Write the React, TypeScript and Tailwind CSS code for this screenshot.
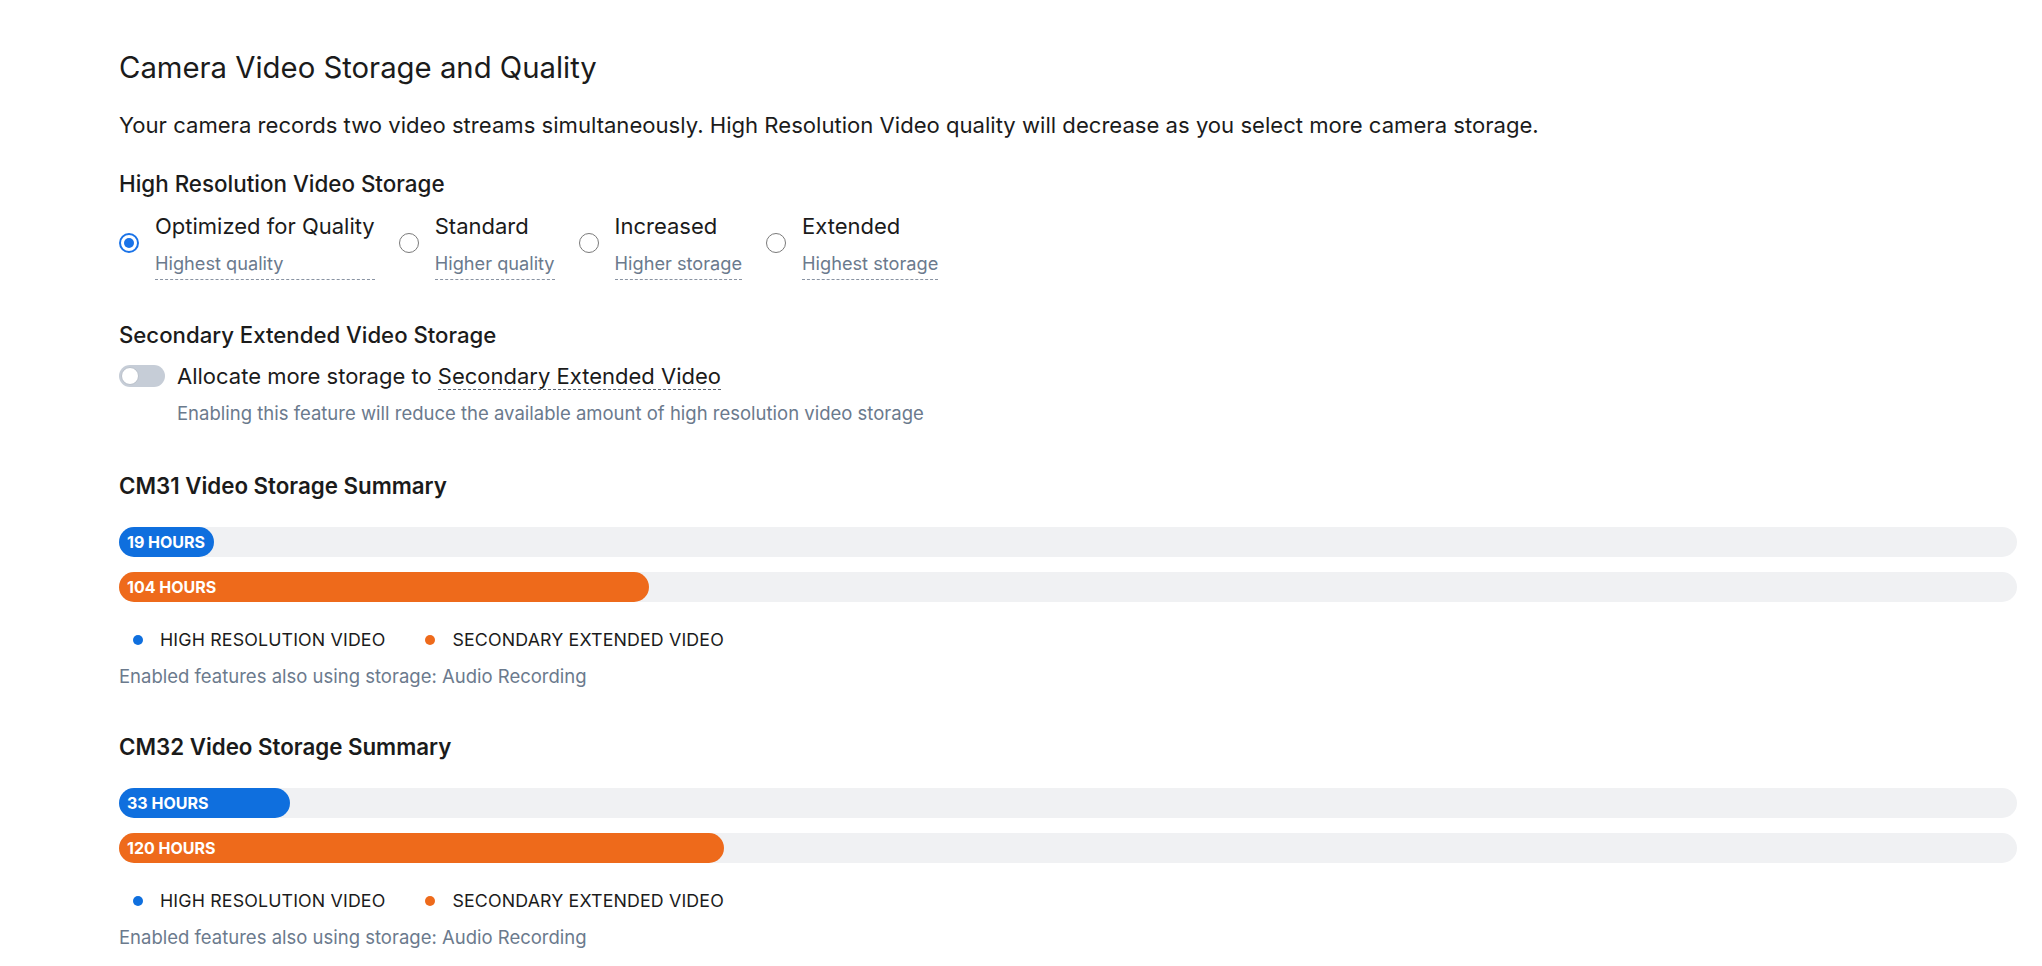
import React from "react";

const font = { fontFamily: "Inter, 'Noto Sans', sans-serif" };

function Radio({ checked }: { checked?: boolean }) {
  return checked ? (
    <span className="mt-[21px] flex h-[20px] w-[20px] shrink-0 items-center justify-center rounded-full border-2 border-[#1a73e8] bg-white">
      <span className="h-[10px] w-[10px] rounded-full bg-[#1a73e8]" />
    </span>
  ) : (
    <span className="mt-[21px] h-[20px] w-[20px] shrink-0 rounded-full border-[1.5px] border-[#7a7a7a] bg-white" />
  );
}

function Option({ label, sub, checked }: { label: string; sub: string; checked?: boolean }) {
  return (
    <div className="flex items-start gap-[16px]">
      <Radio checked={checked} />
      <div className="flex flex-col border-b border-dashed border-[#8a94a3] pb-[4px]">
        <span className="text-[22px] leading-[28px] text-[#1b1b1b]">{label}</span>
        <span className="mt-[11px] text-[18.2px] leading-[24px] text-[#6b7a8d]">{sub}</span>
      </div>
    </div>
  );
}

function Summary({ name, hi, sec, hiPct, secPct, mt }: { name: string; hi: string; sec: string; hiPct: number; secPct: number; mt: string }) {
  return (
    <div className={mt}>
      <div className="text-[22.3px] leading-[28px] font-semibold text-[#1b1b1b]">{name}</div>
      <div className="mt-[27px] flex flex-col gap-[15px]">
        <div className="h-[30px] w-full rounded-full bg-[#f0f1f3]">
          <div className="flex h-full items-center rounded-full bg-[#0f6fde] pl-[8px]" style={{ width: `${hiPct}%` }}>
            <span className="whitespace-nowrap text-[16px] font-bold text-white">{hi}</span>
          </div>
        </div>
        <div className="h-[30px] w-full rounded-full bg-[#f0f1f3]">
          <div className="flex h-full items-center rounded-full bg-[#ee6a1b] pl-[8px]" style={{ width: `${secPct}%` }}>
            <span className="whitespace-nowrap text-[16px] font-bold text-white">{sec}</span>
          </div>
        </div>
      </div>
      <div className="mt-[26px] flex items-center pl-[14px] text-[17.8px] leading-[24px] tracking-[0.15px] text-[#1b1b1b]">
        <span className="h-[10px] w-[10px] rounded-full bg-[#0f6fde]" />
        <span className="ml-[17px]">HIGH RESOLUTION VIDEO</span>
        <span className="ml-[40px] h-[10px] w-[10px] rounded-full bg-[#ee6a1b]" />
        <span className="ml-[17px]">SECONDARY EXTENDED VIDEO</span>
      </div>
      <div className="mt-[12px] text-[18.5px] leading-[24px] text-[#6b7a8d]">Enabled features also using storage: Audio Recording</div>
    </div>
  );
}

export default function App() {
  return (
    <div className="min-h-screen bg-white pl-[119px] pr-[25px] pt-[51px]" style={font}>
      <h1 className="text-[29.3px] leading-[34px] font-normal text-[#1b1b1b]">Camera Video Storage and Quality</h1>
      <p className="mt-[26px] text-[22.1px] leading-[28px] text-[#1b1b1b]">
        Your camera records two video streams simultaneously. High Resolution Video quality will decrease as you select more camera storage.
      </p>
      <div className="mt-[31px] text-[22.4px] leading-[28px] font-medium text-[#1b1b1b]">High Resolution Video Storage</div>
      <div className="mt-[14px] flex gap-[24px]">
        <Option label="Optimized for Quality" sub="Highest quality" checked />
        <Option label="Standard" sub="Higher quality" />
        <Option label="Increased" sub="Higher storage" />
        <Option label="Extended" sub="Highest storage" />
      </div>
      <div className="mt-[41px] text-[22.2px] leading-[28px] font-medium text-[#1b1b1b]">Secondary Extended Video Storage</div>
      <div className="mt-[13px] flex items-center gap-[12px]">
        <span className="flex h-[22px] w-[46px] items-center rounded-full bg-[#c6cdd7] px-[2px]">
          <span className="h-[18px] w-[18px] rounded-full border border-[#b9c0ca] bg-white" />
        </span>
        <span className="text-[22px] leading-[28px] text-[#1b1b1b]">
          Allocate more storage to{" "}
          <span className="border-b border-dashed border-[#5a6472]">Secondary Extended Video</span>
        </span>
      </div>
      <div className="mt-[11px] pl-[58px] text-[18.5px] leading-[24px] text-[#6b7a8d]">
        Enabling this feature will reduce the available amount of high resolution video storage
      </div>
      <Summary name="CM31 Video Storage Summary" hi="19 HOURS" sec="104 HOURS" hiPct={5} secPct={27.9} mt="mt-[47px]" />
      <Summary name="CM32 Video Storage Summary" hi="33 HOURS" sec="120 HOURS" hiPct={9} secPct={31.9} mt="mt-[45px]" />
    </div>
  );
}
